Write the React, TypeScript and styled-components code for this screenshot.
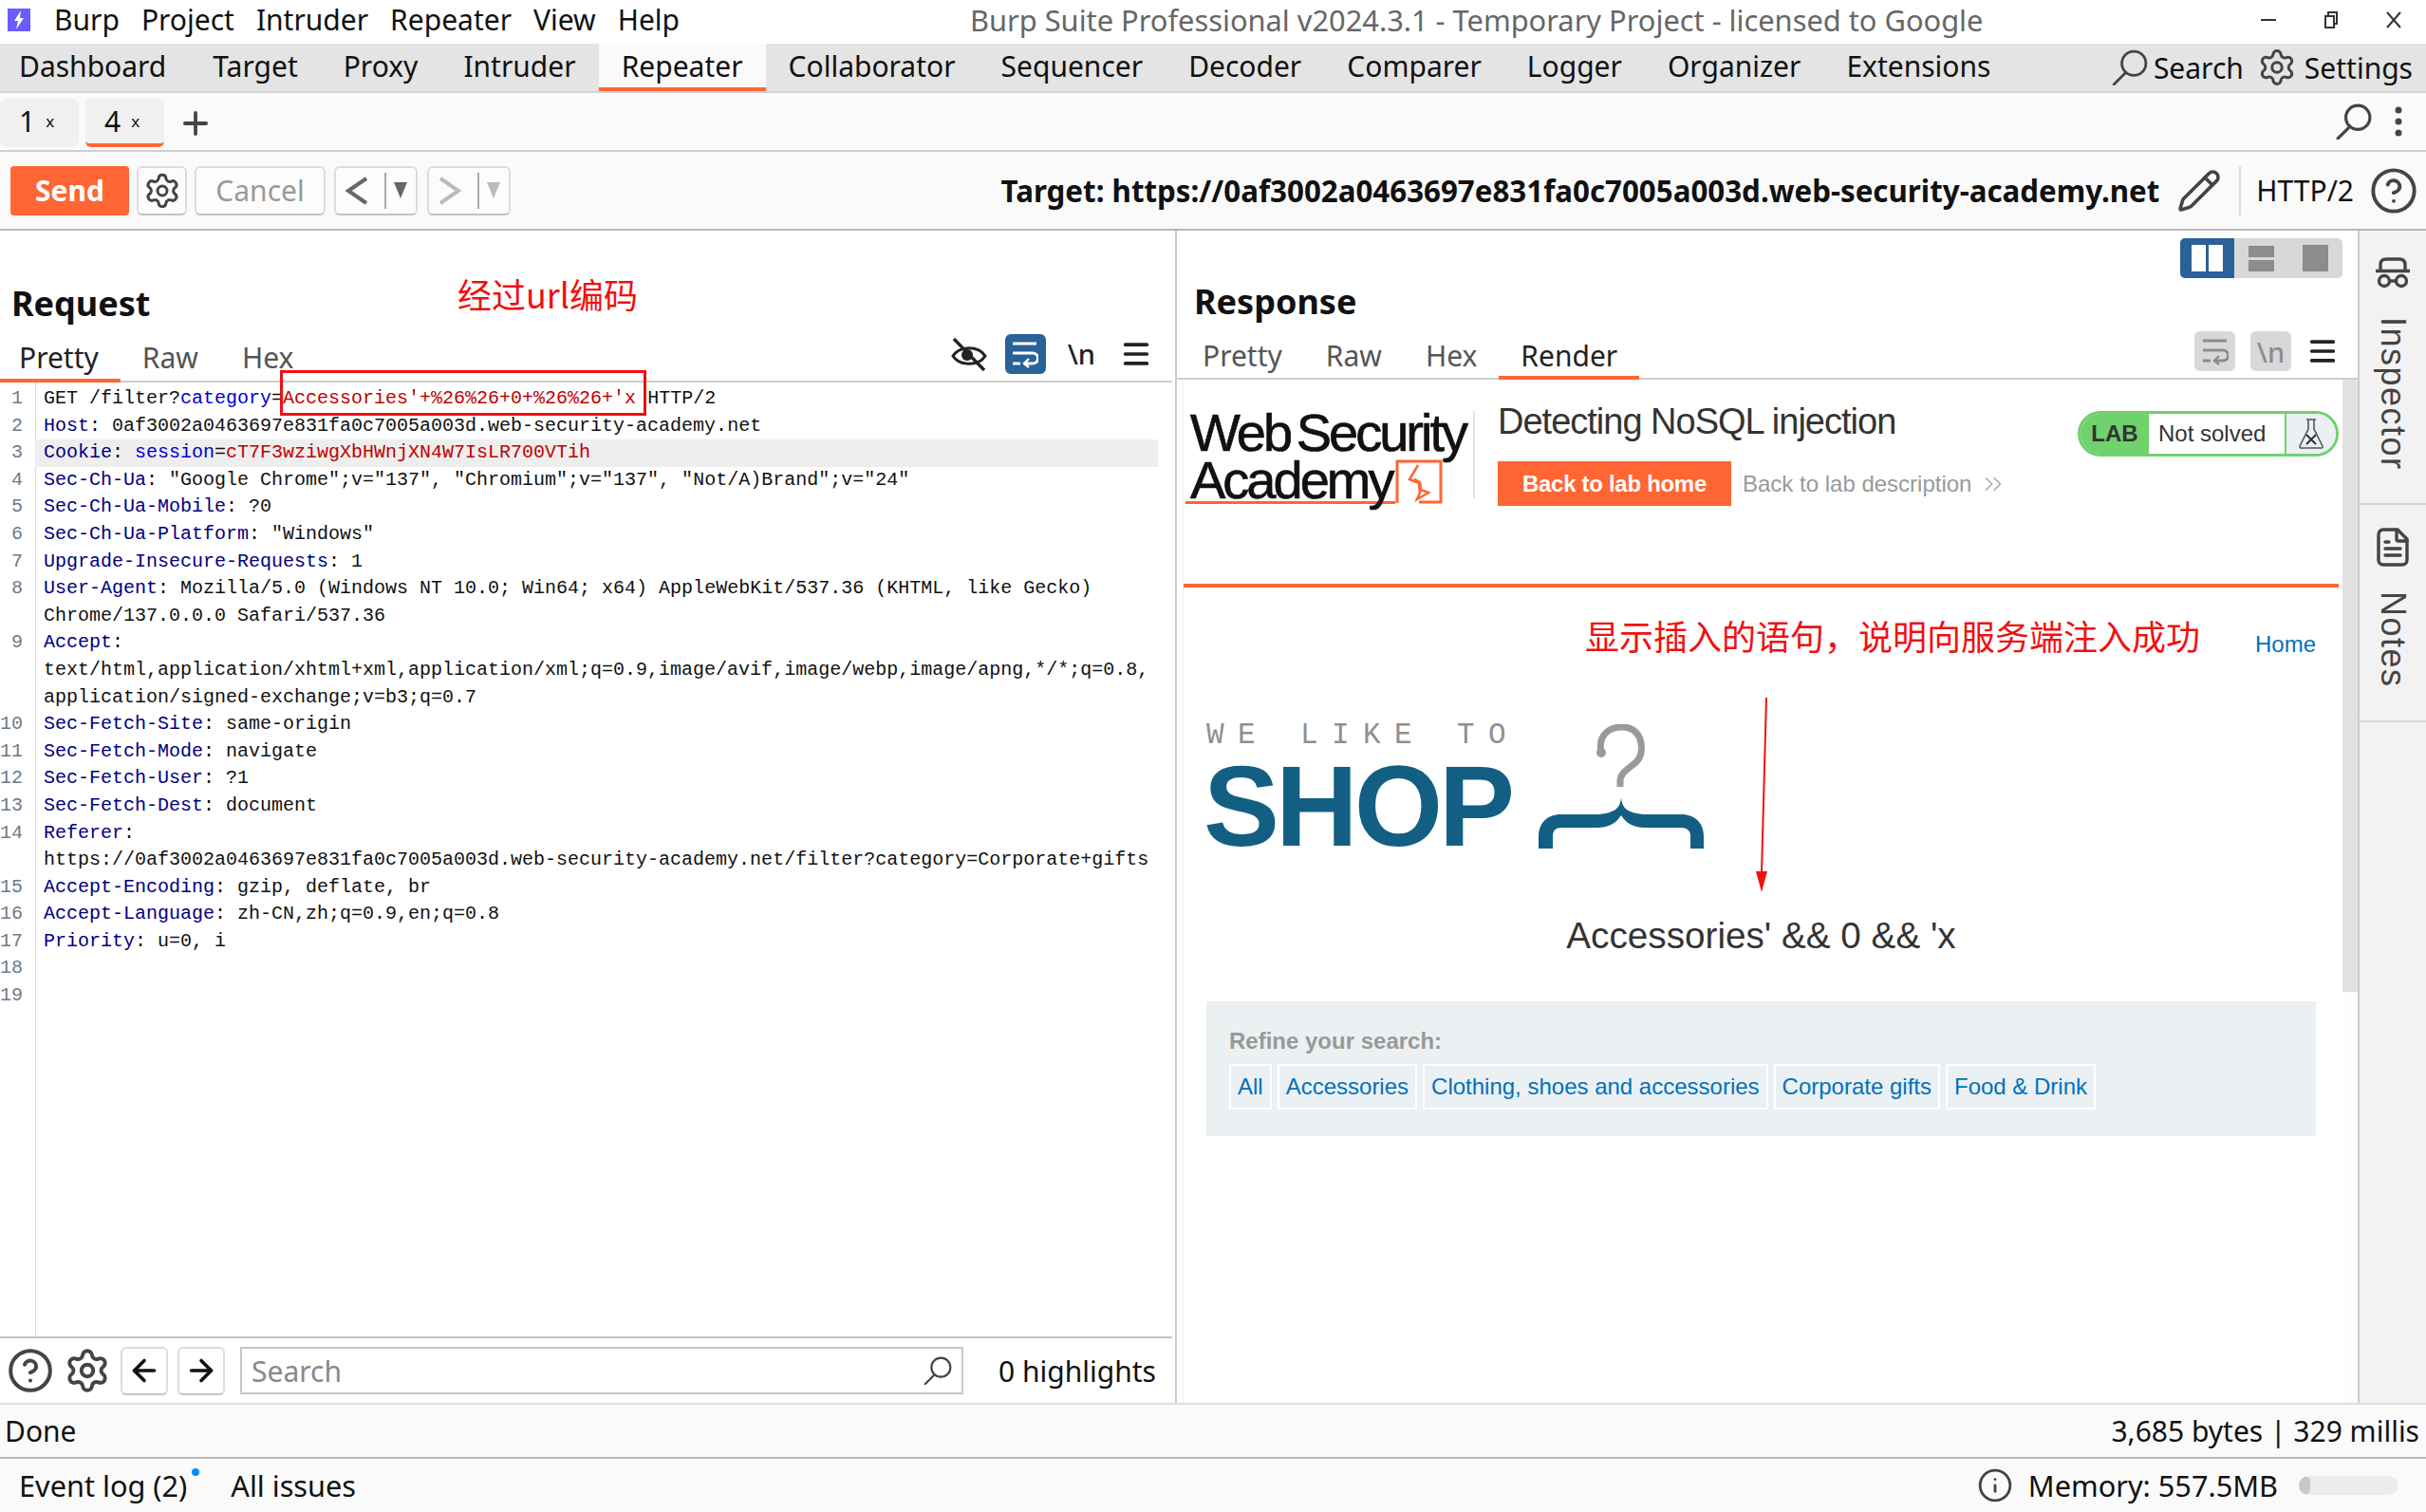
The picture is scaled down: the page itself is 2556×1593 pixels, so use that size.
import React from 'react'
import styled, { createGlobalStyle } from 'styled-components'
import { ArrowLeft, ArrowRight, ChevronsRight, CircleHelp, Info, Menu, Pencil, Plus, Settings } from 'lucide-react'

const GlobalStyle = createGlobalStyle`
  html, body { margin: 0; padding: 0; background: #fff; }
  * { box-sizing: border-box; }
`

const ORANGE = '#ff6633'
const UI_FONT = '"Noto Sans", "Noto Sans CJK SC", sans-serif'
const WEB_FONT = '"Liberation Sans", Arial, sans-serif'
const NOTE_FONT = '"Noto Sans CJK SC", "Liberation Sans", sans-serif'

const Page = styled.div`
  position: relative;
  width: 2556px;
  height: 1593px;
  overflow: hidden;
  display: flex;
  flex-direction: column;
  font-family: ${UI_FONT};
  font-size: 30px;
  color: #111;
  background: #fff;
`

/* window title */
const TitleBar = styled.div`
  height: 46px;
  flex: none;
  display: flex;
  align-items: center;
  padding: 0 0 5px 8px;
`
const AppMark = styled.div`
  width: 24px;
  height: 24px;
  background: #6a5cff;
  display: flex;
  align-items: center;
  justify-content: center;
  margin-right: 25px;
`
const MenuItem = styled.span`
  margin-right: 23px;
`
const WindowTitle = styled.div`
  position: absolute;
  left: 1022px;
  top: 0;
  font-size: 30.8px;
  line-height: 42px;
  color: #666;
`
const WindowControls = styled.div`
  margin-left: auto;
  display: flex;
  align-items: center;
  gap: 50px;
  padding-right: 26px;
`

/* main tool tabs */
const ToolBar = styled.div`
  height: 52px;
  flex: none;
  display: flex;
  background: #e4e4e4;
  border-bottom: 2px solid #d2d2d2;
`
const ToolTab = styled.div<{ $active?: boolean }>`
  padding: 0 24px;
  line-height: 48px;
  background: ${p => (p.$active ? '#fafafa' : 'transparent')};
  border-bottom: 4px solid ${p => (p.$active ? ORANGE : 'transparent')};
  &:first-child { padding: 0 25px 0 20px; }
`
const ToolRight = styled.div`
  margin-left: auto;
  display: flex;
  align-items: center;
  gap: 8px;
  padding-right: 14px;
`
const SearchLabel = styled.span`
  margin: 0 6px 0 -2px;
`

/* repeater tabs */
const TabRow = styled.div`
  height: 62px;
  flex: none;
  display: flex;
  align-items: center;
  background: #fafafa;
  border-bottom: 2px solid #d0d0d0;
  gap: 7px;
`
const RepeaterTab = styled.div<{ $active?: boolean }>`
  width: 83px;
  height: 51px;
  margin-top: 2px;
  padding-left: 20px;
  background: #f0f0f0;
  border-radius: 6px;
  border-bottom: 4px solid ${p => (p.$active ? ORANGE : 'transparent')};
  line-height: 48px;
  display: flex;
  gap: 11px;
`
const TabClose = styled.span`
  font-size: 17px;
`
const AddTab = styled(Plus)`
  margin: 3px 0 0 7px;
`
const TabRowRight = styled.div`
  margin-left: auto;
  display: flex;
  align-items: center;
  gap: 24px;
  padding-right: 25px;
`

/* send toolbar */
const SendBar = styled.div`
  height: 83px;
  flex: none;
  display: flex;
  align-items: center;
  padding: 0 8px 0 11px;
  background: #fafafa;
  border-bottom: 2px solid #bdb6b6;
`
const SendButton = styled.div`
  width: 125px;
  height: 52px;
  background: ${ORANGE};
  border-radius: 4px;
  color: #fff;
  font-weight: 700;
  line-height: 52px;
  text-align: center;
`
const GhostButton = styled.div<{ $w: number; $ml?: number; $muted?: boolean }>`
  width: ${p => p.$w}px;
  height: 52px;
  margin-left: ${p => p.$ml ?? 8}px;
  border: 2px solid #ddd;
  border-bottom-color: #c4c4c4;
  border-radius: 6px;
  background: #fcfcfc;
  display: flex;
  align-items: center;
  justify-content: center;
  color: ${p => (p.$muted ? '#999' : '#555')};
`
const SplitBar = styled.span`
  width: 2px;
  height: 38px;
  margin: 0 8px 0 16px;
  background: #aaa;
`
const Caret = styled.span<{ $muted?: boolean }>`
  width: 0;
  height: 0;
  border-left: 7px solid transparent;
  border-right: 7px solid transparent;
  border-top: 17px solid ${p => (p.$muted ? '#bbb' : '#666')};
`
const TargetBlock = styled.div`
  margin-left: auto;
  display: flex;
  align-items: center;
`
const TargetText = styled.b`
  font-weight: 700;
  font-size: 31.3px;
`
const TargetDivider = styled.span`
  width: 2px;
  height: 52px;
  background: #ddd;
  margin: 0 16px 0 18px;
`

/* panels */
const Main = styled.div`
  flex: 1;
  min-height: 0;
  display: flex;
`
const RequestPane = styled.section`
  width: 1240px;
  flex: none;
  display: flex;
  flex-direction: column;
  border-right: 2px solid #ccc;
`
const PaneTitle = styled.h2<{ $top: number; $left: number }>`
  margin: 0;
  padding: ${p => p.$top}px 0 0 ${p => p.$left}px;
  font-size: 36px;
  font-weight: 700;
  line-height: 48px;
  color: #111;
`
const SubTabs = styled.div<{ $h: number; $pr: number; $ml?: number; $mr?: number }>`
  height: ${p => p.$h}px;
  flex: none;
  display: flex;
  align-items: stretch;
  margin: 0 ${p => p.$mr ?? 0}px 0 ${p => p.$ml ?? 0}px;
  border-bottom: 2px solid #ccc;
  padding-right: ${p => p.$pr}px;
`
const SubTab = styled.div<{ $active?: boolean; $muted?: boolean; $pl?: number }>`
  padding: 11px 23px 0 ${p => p.$pl ?? 23}px;
  margin-bottom: -2px;
  line-height: 44px;
  color: ${p => (p.$muted ? '#555' : '#222')};
  border-bottom: 4px solid ${p => (p.$active ? ORANGE : 'transparent')};
`
const SubTabIcons = styled.div<{ $gap: number }>`
  margin-left: auto;
  display: flex;
  align-items: center;
  gap: ${p => p.$gap}px;
`
const IconButton = styled.div<{ $on?: boolean; $off?: boolean }>`
  width: 43px;
  height: 42px;
  border-radius: 6px;
  display: flex;
  align-items: center;
  justify-content: center;
  background: ${p => (p.$on ? '#2a6199' : p.$off ? '#d8d8d8' : 'transparent')};
  color: ${p => (p.$on ? '#fff' : p.$off ? '#8c8c8c' : '#222')};
`
const Newline = styled.span<{ $off?: boolean; $mx?: number }>`
  font-size: 29px;
  font-weight: 500;
  margin: 0 ${p => p.$mx ?? 0}px 0 ${p => (p.$mx ? 4 : 0)}px;
  color: ${p => (p.$off ? '#8c8c8c' : '#222')};
`

/* message editor */
const Editor = styled.div`
  flex: 1;
  min-height: 0;
  margin-right: 3px;
  font-family: "Liberation Mono", monospace;
  font-size: 20px;
  line-height: 28.6px;
  padding-top: 3px;
  border-bottom: 2px solid #c4bfbf;
  background: linear-gradient(90deg, transparent 37px, #ddd 37px, #ddd 38px, transparent 38px);
`
const CodeRow = styled.div`
  display: flex;
  height: 28.6px;
`
const LineNo = styled.span`
  width: 37px;
  flex: none;
  padding-right: 13px;
  text-align: right;
  color: #6d7a88;
`
const LineText = styled.span<{ $hl?: boolean }>`
  width: 1183px;
  padding-left: 9px;
  white-space: pre;
  background: ${p => (p.$hl ? '#eeeeee' : 'transparent')};
`
const Token = styled.span<{ $kind: string }>`
  color: ${p => ({ k: '#000080', b: '#0000d0', r: '#c00000', t: '#111' }[p.$kind])};
`

/* search strip */
const SearchStrip = styled.div`
  height: 68px;
  flex: none;
  display: flex;
  align-items: center;
  padding: 0 20px 0 7px;
  gap: 10px;
  color: #444;
`
const SmallButton = styled.div`
  width: 50px;
  height: 51px;
  border: 2px solid #ddd;
  border-bottom-color: #c4c4c4;
  border-radius: 6px;
  display: flex;
  align-items: center;
  justify-content: center;
  color: #111;
`
const SearchField = styled.div`
  width: 762px;
  height: 50px;
  margin-left: 6px;
  border: 2px solid #c8c8c8;
  padding: 0 10px 0 10px;
  display: flex;
  align-items: center;
  justify-content: space-between;
  color: #888;
`
const Highlights = styled.span`
  margin-left: auto;
  color: #111;
`

/* response */
const ResponsePane = styled.section`
  flex: 1;
  min-width: 0;
  display: flex;
  flex-direction: column;
`
const ViewSwitch = styled.div`
  height: 50px;
  flex: none;
  padding: 8px 16px 0 0;
  display: flex;
  justify-content: flex-end;
`
const ViewButton = styled.div<{ $on?: boolean }>`
  width: 57px;
  height: 42px;
  display: flex;
  align-items: center;
  justify-content: center;
  gap: 3px;
  background: ${p => (p.$on ? '#2a6199' : '#d8d8d8')};
  &:first-child { border-radius: 5px 0 0 5px; }
  &:last-child { border-radius: 0 5px 5px 0; }
`
const ViewStack = styled.span`
  display: flex;
  flex-direction: column;
  gap: 3px;
`
const ViewBlock = styled.i<{ $w: number; $h: number; $on?: boolean }>`
  display: block;
  width: ${p => p.$w}px;
  height: ${p => p.$h}px;
  background: ${p => (p.$on ? '#fff' : '#8c8c8c')};
`
const ResponseBody = styled.div`
  flex: 1;
  min-height: 0;
  display: flex;
`
const RenderView = styled.div`
  position: relative;
  flex: 1;
  min-width: 0;
  margin-left: 6px;
  padding-right: 4px;
  font-family: ${WEB_FONT};
  border-left: 1px solid #f0f0f0;
`
const ScrollTrack = styled.div`
  width: 16px;
  flex: none;
  background: #fdfdfd;
`
const ScrollThumb = styled.div`
  height: 645px;
  background: #e2e2e2;
`
const LabHeader = styled.header`
  height: 219px;
  display: flex;
  align-items: flex-start;
  border-bottom: 4px solid ${ORANGE};
`
const AcademyLogo = styled.div`
  width: 307px;
  height: 92px;
  margin-top: 33px;
  padding-left: 2px;
  border-right: 2px solid #e4e4e4;
  font-size: 56px;
  line-height: 50px;
  letter-spacing: -3px;
  word-spacing: -6px;
  -webkit-text-stroke: 0.7px #111;
  color: #111;
  white-space: nowrap;
`
const LogoTopLine = styled.div`
  margin-top: -2px;
  padding-left: 5px;
`
const LogoBottomLine = styled.div`
  display: flex;
  align-items: flex-end;
`
const AcademyWord = styled.span`
  display: block;
  height: 50px;
  padding: 0 4px 0 5px;
  border-bottom: 3px solid ${ORANGE};
`
const LabInfo = styled.div`
  margin: 24px 0 0 24px;
  display: flex;
  flex-direction: column;
`
const LabTitle = styled.div`
  font-size: 38px;
  line-height: 40px;
  color: #333;
  letter-spacing: -1px;
`
const LabLinks = styled.div`
  margin-top: 22px;
  display: flex;
  align-items: center;
  gap: 12px;
  color: #999;
  font-size: 24px;
`
const LabButton = styled.div`
  width: 246px;
  height: 47px;
  background: ${ORANGE};
  color: #fff;
  font-weight: 700;
  line-height: 47px;
  text-align: center;
  letter-spacing: -0.3px;
`
const LabBadge = styled.div`
  margin: 33px 0 0 auto;
  width: 275px;
  height: 48px;
  border: 3px solid #70d16d;
  border-radius: 24px;
  overflow: hidden;
  display: flex;
  font-size: 24px;
  line-height: 42px;
  background: #fff;
  color: #333;
`
const BadgeLab = styled.b`
  width: 72px;
  background: #70d16d;
  text-align: center;
`
const BadgeStatus = styled.span`
  flex: 1;
  padding-left: 10px;
`
const BadgeFlask = styled.span`
  width: 54px;
  background: #ebf0f2;
  border-left: 2px solid #70d16d;
  display: flex;
  align-items: center;
  justify-content: center;
`
const MoreChevrons = styled(ChevronsRight)`
  margin-left: -4px;
`
const ShopBody = styled.div`
  padding: 48px 24px 0 24px;
`
const HomeLink = styled.div`
  text-align: right;
  font-size: 24px;
  line-height: 24px;
  color: #0071bc;
`
const ShopLogo = styled.div`
  margin-top: 72px;
  display: flex;
  gap: 28px;
`
const ShopWords = styled.div`
  width: 322px;
  white-space: nowrap;
`
const ShopTagline = styled.div`
  font-family: "Liberation Mono", monospace;
  font-size: 31px;
  line-height: 23px;
  letter-spacing: 14.4px;
  color: #8f8f8f;
`
const ShopName = styled.div`
  margin: 19px 0 0 -3px;
  font-weight: 700;
  font-size: 120px;
  line-height: 89px;
  letter-spacing: -4px;
  color: #135f84;
`
const SearchHeading = styled.h1`
  margin: 72px 0 0;
  font-size: 38.7px;
  font-weight: 400;
  line-height: 40px;
  text-align: center;
  color: #333;
`
const FilterBox = styled.div`
  margin-top: 49px;
  height: 142px;
  padding: 28px 24px 0;
  background: #ebf0f2;
`
const FilterLabel = styled.div`
  font-size: 24px;
  line-height: 28px;
  font-weight: 700;
  color: #999;
`
const FilterTags = styled.div`
  margin-top: 10px;
  display: flex;
  gap: 6px;
`
const FilterTag = styled.span`
  height: 48px;
  padding: 0 7px;
  border: 2px solid #fff;
  font-size: 24px;
  line-height: 44px;
  color: #0071bc;
`

/* inspector rail */
const SideRail = styled.aside`
  width: 72px;
  flex: none;
  background: #f3f2f3;
  border-left: 2px solid #ccc;
`
const RailSection = styled.div<{ $h: number; $top: number; $gap: number }>`
  height: ${p => p.$h}px;
  padding-top: ${p => p.$top}px;
  border-bottom: 2px solid #d6d6d6;
  display: flex;
  flex-direction: column;
  align-items: center;
  gap: ${p => p.$gap}px;
  color: #444;
`
const RailLabel = styled.span`
  writing-mode: vertical-rl;
  font-size: 36px;
  line-height: 40px;
  letter-spacing: 1.5px;
  font-family: ${WEB_FONT};
`

/* footer bars */
const StatusBar = styled.div`
  height: 59px;
  flex: none;
  display: flex;
  align-items: center;
  justify-content: space-between;
  padding: 0 7px 0 5px;
  background: #fafafa;
  border-top: 2px solid #ddd;
  border-bottom: 2px solid #bdb6b6;
`
const BottomBar = styled.div`
  height: 56px;
  flex: none;
  display: flex;
  align-items: center;
  padding: 0 29px 0 20px;
  font-size: 30.7px;
  background: #fafafa;
`
const EventLog = styled.span`
  position: relative;
  margin-right: 46px;
`
const EventDot = styled.i`
  position: absolute;
  right: -13px;
  top: 3px;
  width: 8px;
  height: 8px;
  border-radius: 50%;
  background: #0090ff;
`
const MemoryBlock = styled.div`
  margin-left: auto;
  display: flex;
  align-items: center;
  gap: 16px;
`
const MemoryMeter = styled.div`
  width: 105px;
  height: 20px;
  margin-left: 6px;
  background: #ececec;
  border-radius: 10px;
  overflow: hidden;
`
const MemoryFill = styled.div`
  height: 100%;
  background: #c8c8c8;
  border-radius: 10px;
`

/* red notes drawn over the screenshot */
const NoteText = styled.div<{ $size: number; $x: number; $y: number }>`
  position: absolute;
  left: ${p => p.$x}px;
  top: ${p => p.$y}px;
  font-family: ${NOTE_FONT};
  font-size: ${p => p.$size}px;
  line-height: 1.2;
  color: #f01010;
  white-space: nowrap;
`
const NoteBox = styled.div`
  position: absolute;
  left: 295px;
  top: 390px;
  width: 386px;
  height: 48px;
  border: 3px solid #ee1111;
`
const NoteArrow = styled.svg`
  position: absolute;
  left: 1846px;
  top: 730px;
`

const Magnifier = ({ size, sw = 2.6 }: { size: number; sw?: number }) => (
  <svg width={size} height={size} viewBox="0 0 36 36" fill="none" stroke="#444" strokeWidth={sw} strokeLinecap="round">
    <circle cx="22" cy="14" r="12" />
    <path d="M14 23L2 35" />
  </svg>
)

const NavChevron = ({ dir, color }: { dir: 'l' | 'r'; color: string }) => (
  <svg width="26" height="30" viewBox="0 0 26 30" fill="none" stroke={color} strokeWidth="4">
    <path d={dir === 'l' ? 'M23 2L4 15l19 13' : 'M3 2l19 13L3 28'} />
  </svg>
)

const EyeSlash = () => (
  <svg width="38" height="38" viewBox="0 0 38 38" fill="none" stroke="#222" strokeWidth="3">
    <path d="M2 21C9 10 29 10 36 21 29 32 9 32 2 21z" />
    <circle cx="17" cy="20" r="6" fill="#222" stroke="none" />
    <path d="M3 3l32 33" strokeWidth="3.4" />
  </svg>
)

const WrapIcon = ({ color }: { color: string }) => (
  <svg width="28" height="30" viewBox="0 0 28 30" fill="none" stroke={color} strokeWidth="3">
    <path d="M1 4h25M1 14h21a5.500 5.500 0 0 1 0 11h-9" />
    <path d="M18 20l-5 5 5 4" strokeWidth="2.4" />
    <path d="M1 25h8" />
  </svg>
)

const InspectorIcon = () => (
  <svg width="38" height="33" viewBox="0 0 38 33" fill="none" stroke="#444" strokeWidth="3.400">
    <path d="M1 14.500h36" />
    <path d="M6 14V8c0-4 2-6 6-6h14c4 0 6 2 6 6v6" />
    <circle cx="10" cy="25" r="5.500" />
    <circle cx="28" cy="25" r="5.500" />
    <path d="M15.500 25h7" />
  </svg>
)

const NotesIcon = () => (
  <svg width="34" height="41" viewBox="0 0 34 41" fill="none" stroke="#444" strokeWidth="3.400" strokeLinecap="round">
    <path d="M22 2H7a5 5 0 0 0-5 5v27a5 5 0 0 0 5 5h20a5 5 0 0 0 5-5V12z" />
    <path d="M21 3v9a2 2 0 0 0 2 2h9" />
    <path d="M9 15h4M9 22h16M9 29h16" />
  </svg>
)

const FlaskIcon = () => (
  <svg width="26" height="32" viewBox="0 0 26 32" fill="none" stroke="#555" strokeWidth="1.600">
    <path d="M8 1h10M10 1v10L1 29a1.500 1.500 0 0 0 1.500 2h21a1.500 1.500 0 0 0 1.500-2L16 11V1" />
    <path d="M8 17l10 10M18 17L8 27" strokeWidth="2" stroke="#333" />
  </svg>
)

const HangerIcon = () => (
  <svg width="174" height="131" viewBox="0 0 174 131">
    <path d="M66 30C62 10 76 3 88 3c16 0 22 13 20 27-2 14-20 16-22 28v8" fill="none" stroke="#9a9a9a" strokeWidth="7" />
    <circle cx="66" cy="30" r="5" fill="#9a9a9a" />
    <path d="M87 77c1 13 8 16 23 18h40c16 0 24 10 24 23v13h-14v-13c0-6-4-9-10-9h-38c-12 0-20-5-25-13-5 8-13 13-25 13H24c-6 0-9 3-9 9v13H0v-13c0-13 8-23 24-23h40c15-2 22-5 23-18z" fill="#135f84" />
  </svg>
)

const AcademyBolt = () => (
  <svg width="50" height="47" viewBox="0 0 50 47" fill="none" stroke={ORANGE} strokeWidth="3">
    <path d="M2 46V2h46v43H25" />
    <path d="M24 6l-9 15 10 4 1 10-3 7 12-7-8-3-1-8-6-3" strokeWidth="2.600" />
  </svg>
)

type Row = { n?: number; hl?: boolean; parts: [string, string][] }

const rows: Row[] = [
  { n: 1, parts: [['t', 'GET /filter?'], ['b', 'category'], ['t', '='], ['r', "Accessories'+%26%26+0+%26%26+'x"], ['t', ' HTTP/2']] },
  { n: 2, parts: [['k', 'Host'], ['t', ': 0af3002a0463697e831fa0c7005a003d.web-security-academy.net']] },
  { n: 3, hl: true, parts: [['k', 'Cookie'], ['t', ': '], ['b', 'session'], ['t', '='], ['r', 'cT7F3wziwgXbHWnjXN4W7IsLR700VTih']] },
  { n: 4, parts: [['k', 'Sec-Ch-Ua'], ['t', ': "Google Chrome";v="137", "Chromium";v="137", "Not/A)Brand";v="24"']] },
  { n: 5, parts: [['k', 'Sec-Ch-Ua-Mobile'], ['t', ': ?0']] },
  { n: 6, parts: [['k', 'Sec-Ch-Ua-Platform'], ['t', ': "Windows"']] },
  { n: 7, parts: [['k', 'Upgrade-Insecure-Requests'], ['t', ': 1']] },
  { n: 8, parts: [['k', 'User-Agent'], ['t', ': Mozilla/5.0 (Windows NT 10.0; Win64; x64) AppleWebKit/537.36 (KHTML, like Gecko)']] },
  { parts: [['t', 'Chrome/137.0.0.0 Safari/537.36']] },
  { n: 9, parts: [['k', 'Accept'], ['t', ':']] },
  { parts: [['t', 'text/html,application/xhtml+xml,application/xml;q=0.9,image/avif,image/webp,image/apng,*/*;q=0.8,']] },
  { parts: [['t', 'application/signed-exchange;v=b3;q=0.7']] },
  { n: 10, parts: [['k', 'Sec-Fetch-Site'], ['t', ': same-origin']] },
  { n: 11, parts: [['k', 'Sec-Fetch-Mode'], ['t', ': navigate']] },
  { n: 12, parts: [['k', 'Sec-Fetch-User'], ['t', ': ?1']] },
  { n: 13, parts: [['k', 'Sec-Fetch-Dest'], ['t', ': document']] },
  { n: 14, parts: [['k', 'Referer'], ['t', ':']] },
  { parts: [['t', 'https://0af3002a0463697e831fa0c7005a003d.web-security-academy.net/filter?category=Corporate+gifts']] },
  { n: 15, parts: [['k', 'Accept-Encoding'], ['t', ': gzip, deflate, br']] },
  { n: 16, parts: [['k', 'Accept-Language'], ['t', ': zh-CN,zh;q=0.9,en;q=0.8']] },
  { n: 17, parts: [['k', 'Priority'], ['t', ': u=0, i']] },
  { n: 18, parts: [] },
  { n: 19, parts: [] },
]

const tools = ['Dashboard', 'Target', 'Proxy', 'Intruder', 'Repeater', 'Collaborator', 'Sequencer', 'Decoder', 'Comparer', 'Logger', 'Organizer', 'Extensions']
const filters = ['All', 'Accessories', 'Clothing, shoes and accessories', 'Corporate gifts', 'Food & Drink']

export default function App() {
  return (
    <Page>
      <GlobalStyle />
      <TitleBar>
        <AppMark>
          <svg width="12" height="20" viewBox="0 0 12 20"><path d="M8 0L1 11h4l-2 9 8-12H7z" fill="#fff" /></svg>
        </AppMark>
        {['Burp', 'Project', 'Intruder', 'Repeater', 'View', 'Help'].map(m => <MenuItem key={m}>{m}</MenuItem>)}
        <WindowTitle>Burp Suite Professional v2024.3.1 - Temporary Project - licensed to Google</WindowTitle>
        <WindowControls>
          <svg width="16" height="4"><path d="M0 2h16" stroke="#333" strokeWidth="2" /></svg>
          <svg width="16" height="18" fill="none" stroke="#333" strokeWidth="2"><path d="M2 5h9v12H2zM5 5V1h9v12h-3" /></svg>
          <svg width="16" height="18" fill="none" stroke="#333" strokeWidth="2"><path d="M1 1l14 16M15 1L1 17" /></svg>
        </WindowControls>
      </TitleBar>

      <ToolBar>
        {tools.map(t => <ToolTab key={t} $active={t === 'Repeater'}>{t}</ToolTab>)}
        <ToolRight>
          <Magnifier size={38} />
          <SearchLabel>Search</SearchLabel>
          <Settings size={42} strokeWidth={1.7} color="#444" />
          <span>Settings</span>
        </ToolRight>
      </ToolBar>

      <TabRow>
        <RepeaterTab>1<TabClose>x</TabClose></RepeaterTab>
        <RepeaterTab $active>4<TabClose>x</TabClose></RepeaterTab>
        <AddTab size={38} strokeWidth={2.4} color="#444" />
        <TabRowRight>
          <Magnifier size={38} sw={3} />
          <svg width="8" height="34"><circle cx="4" cy="5" r="3.500" fill="#444" /><circle cx="4" cy="17" r="3.500" fill="#444" /><circle cx="4" cy="29" r="3.500" fill="#444" /></svg>
        </TabRowRight>
      </TabRow>

      <SendBar>
        <SendButton>Send</SendButton>
        <GhostButton $w={53}><Settings size={40} strokeWidth={1.8} color="#444" /></GhostButton>
        <GhostButton $w={138} $muted>Cancel</GhostButton>
        <GhostButton $w={88} $ml={9}><NavChevron dir="l" color="#666" /><SplitBar /><Caret /></GhostButton>
        <GhostButton $w={88} $ml={10}><NavChevron dir="r" color="#bbb" /><SplitBar /><Caret $muted /></GhostButton>
        <TargetBlock>
          <TargetText>Target: https://0af3002a0463697e831fa0c7005a003d.web-security-academy.net</TargetText>
          <Pencil size={48} strokeWidth={1.8} color="#444" style={{ marginLeft: 18 }} />
          <TargetDivider />
          <span>HTTP/2</span>
          <CircleHelp size={52} strokeWidth={1.8} color="#444" style={{ marginLeft: 16 }} />
        </TargetBlock>
      </SendBar>

      <Main>
        <RequestPane>
          <PaneTitle $top={53} $left={12}>Request</PaneTitle>
          <SubTabs $h={59} $pr={21} $mr={3}>
            <SubTab $active $pl={20}>Pretty</SubTab>
            <SubTab $muted>Raw</SubTab>
            <SubTab $muted>Hex</SubTab>
            <SubTabIcons $gap={19}>
              <EyeSlash />
              <IconButton $on><WrapIcon color="#fff" /></IconButton>
              <Newline $mx={7}>\n</Newline>
              <Menu size={34} strokeWidth={2.6} color="#222" />
            </SubTabIcons>
          </SubTabs>
          <Editor>
            {rows.map((r, i) => (
              <CodeRow key={i}>
                <LineNo>{r.n}</LineNo>
                <LineText $hl={r.hl}>
                  {r.parts.map(([kind, text], j) => <Token key={j} $kind={kind}>{text}</Token>)}
                </LineText>
              </CodeRow>
            ))}
          </Editor>
          <SearchStrip>
            <CircleHelp size={50} strokeWidth={1.9} />
            <Settings size={50} strokeWidth={1.9} />
            <SmallButton><ArrowLeft size={36} strokeWidth={2.4} /></SmallButton>
            <SmallButton><ArrowRight size={36} strokeWidth={2.4} /></SmallButton>
            <SearchField>Search<Magnifier size={30} /></SearchField>
            <Highlights>0 highlights</Highlights>
          </SearchStrip>
        </RequestPane>

        <ResponsePane>
          <ViewSwitch>
            <ViewButton $on><ViewBlock $w={15} $h={28} $on /><ViewBlock $w={15} $h={28} $on /></ViewButton>
            <ViewButton><ViewStack><ViewBlock $w={27} $h={12} /><ViewBlock $w={27} $h={12} /></ViewStack></ViewButton>
            <ViewButton><ViewBlock $w={27} $h={28} /></ViewButton>
          </ViewSwitch>
          <PaneTitle $top={1} $left={18}>Response</PaneTitle>
          <SubTabs $h={58} $pr={20}>
            <SubTab $muted $pl={27}>Pretty</SubTab>
            <SubTab $muted>Raw</SubTab>
            <SubTab $muted>Hex</SubTab>
            <SubTab $active>Render</SubTab>
            <SubTabIcons $gap={16}>
              <IconButton $off><WrapIcon color="#8c8c8c" /></IconButton>
              <IconButton $off><Newline $off>\n</Newline></IconButton>
              <Menu size={34} strokeWidth={2.6} color="#222" />
            </SubTabIcons>
          </SubTabs>
          <ResponseBody>
            <RenderView>
              <LabHeader>
                <AcademyLogo>
                  <LogoTopLine>Web Security</LogoTopLine>
                  <LogoBottomLine><AcademyWord>Academy</AcademyWord><AcademyBolt /></LogoBottomLine>
                </AcademyLogo>
                <LabInfo>
                  <LabTitle>Detecting NoSQL injection</LabTitle>
                  <LabLinks>
                    <LabButton>Back to lab home</LabButton>
                    <span>Back to lab description</span>
                    <MoreChevrons size={30} strokeWidth={1.3} color="#aaa" />
                  </LabLinks>
                </LabInfo>
                <LabBadge>
                  <BadgeLab>LAB</BadgeLab>
                  <BadgeStatus>Not solved</BadgeStatus>
                  <BadgeFlask><FlaskIcon /></BadgeFlask>
                </LabBadge>
              </LabHeader>
              <ShopBody>
                <HomeLink>Home</HomeLink>
                <ShopLogo>
                  <ShopWords>
                    <ShopTagline>WE LIKE TO</ShopTagline>
                    <ShopName>SHOP</ShopName>
                  </ShopWords>
                  <HangerIcon />
                </ShopLogo>
                <SearchHeading>Accessories&apos; &amp;&amp; 0 &amp;&amp; &apos;x</SearchHeading>
                <FilterBox>
                  <FilterLabel>Refine your search:</FilterLabel>
                  <FilterTags>
                    {filters.map(f => <FilterTag key={f}>{f}</FilterTag>)}
                  </FilterTags>
                </FilterBox>
              </ShopBody>
            </RenderView>
            <ScrollTrack><ScrollThumb /></ScrollTrack>
          </ResponseBody>
        </ResponsePane>

        <SideRail>
          <RailSection $h={289} $top={28} $gap={30}>
            <InspectorIcon />
            <RailLabel>Inspector</RailLabel>
          </RailSection>
          <RailSection $h={229} $top={24} $gap={26}>
            <NotesIcon />
            <RailLabel>Notes</RailLabel>
          </RailSection>
        </SideRail>
      </Main>

      <StatusBar>
        <span>Done</span>
        <span>3,685 bytes | 329 millis</span>
      </StatusBar>
      <BottomBar>
        <EventLog>Event log (2)<EventDot /></EventLog>
        <span>All issues</span>
        <MemoryBlock>
          <Info size={38} strokeWidth={1.8} color="#444" />
          <span>Memory: 557.5MB</span>
          <MemoryMeter><MemoryFill style={{ width: 12 }} /></MemoryMeter>
        </MemoryBlock>
      </BottomBar>

      <NoteBox />
      <NoteText $size={36} $x={482} $y={288}>经过url编码</NoteText>
      <NoteText $size={36} $x={1670} $y={648}>显示插入的语句，说明向服务端注入成功</NoteText>
      <NoteArrow width="24" height="214" viewBox="0 0 24 214">
        <path d="M15 5L10 190" stroke="#f01010" strokeWidth="2" />
        <path d="M4 188h12l-6 22z" fill="#f01010" />
      </NoteArrow>
    </Page>
  )
}
